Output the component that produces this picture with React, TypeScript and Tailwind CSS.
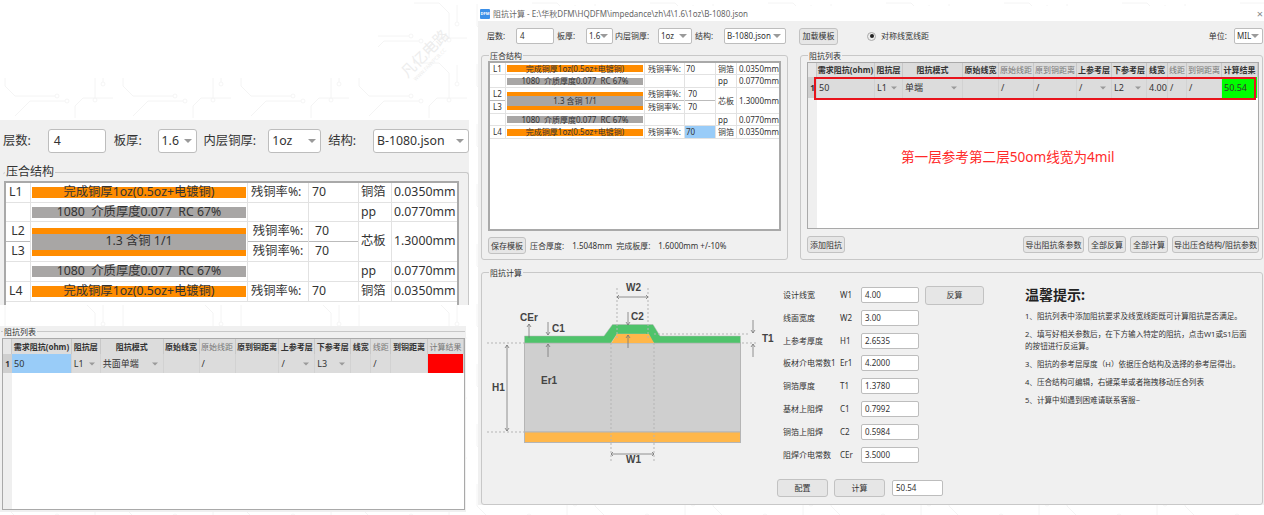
const font = 'font-["Noto_Sans","Noto_Sans_CJK_SC",sans-serif]'

const orange = 'bg-[#ff8c00]'
const grey = 'bg-[#a8a6a5]'

function Caret({ className }: { className: string }) {
	return <span className={`border-x-[4px] border-t-[4px] border-x-transparent border-t-[#9a9a9a] ${className}`} />
}

function Field({ value, className, caret }: { value: string; className: string; caret?: boolean }) {
	return (
		<div className={`flex items-center justify-between bg-white border border-[#bdbdbd] rounded-[2px] shrink-0 ${className}`}>
			<span>{value}</span>
			{caret && <Caret className="mr-1" />}
		</div>
	)
}

function Btn({ label, className }: { label: string; className: string }) {
	return <div className={`flex items-center justify-center bg-[#e6e6e6] border border-[#c2c2c2] rounded-[3px] text-[#333] shrink-0 ${className}`}>{label}</div>
}

function Group({ title, className, titleClass, children }: { title: string; className: string; titleClass: string; children?: React.ReactNode }) {
	return (
		<div className={`relative border border-[#c8c8c8] rounded-[3px] ${className}`}>
			<span className={`absolute bg-[#f0f0f0] px-[1px] leading-none text-[#333] ${titleClass}`}>{title}</span>
			{children}
		</div>
	)
}

// faint circuit board background, only shows in the gaps between the panels
function Watermark() {
	return (
		<svg className="absolute inset-0 w-[1264px] h-[515px]" viewBox="0 0 1264 515">
			<defs>
				<pattern id="pcb" width="118" height="60" patternUnits="userSpaceOnUse">
					<g fill="none" stroke="#f4f4f4" strokeWidth="1">
						<path d="M5 4v22l10 10h40M60 3h25l10 10v25M15 56l15-15h35M75 58V46l8-8h30M103 5v17" />
						<circle cx="57" cy="36" r="2" />
						<circle cx="95" cy="40" r="2" />
						<circle cx="103" cy="24" r="2" />
						<circle cx="67" cy="41" r="2" />
					</g>
				</pattern>
			</defs>
			<rect x="378" y="0" width="886" height="78" fill="url(#pcb)" />
			<rect x="0" y="78" width="1264" height="437" fill="url(#pcb)" />
			<g transform="rotate(-45 425 58)" fontFamily="Noto Sans CJK SC, sans-serif" fill="#ededed">
				<text x="398" y="60" fontSize="15">凡亿电路</text>
				<text x="402" y="68" fontSize="5">WWW.FANYPCB.CC</text>
			</g>
		</svg>
	)
}

type StackSize = {
	box: string
	row: string[]
	cols: string[]
	bar: string
	core: string
	coreBar: string
	pad: string
	corePad: string
}

const bigStack: StackSize = {
	box: 'w-[455px] h-[124px] border-x-2 border-t-2 border-[#a9a9a9] text-[12.3px]',
	row: ['h-[20px]', 'h-[19px]', 'h-[40px]', 'h-[20px]', 'h-[20px]'],
	cols: ['w-[25px]', 'w-[217px]', 'w-[61px]', 'w-[50px]', 'w-[33px]', 'flex-1'],
	bar: 'h-[11px] mx-[1px] w-[214px]',
	core: 'h-[28px] w-[214px] mx-[1px]',
	coreBar: 'h-[6px]',
	pad: 'pl-[3px]',
	corePad: 'pl-[6px]',
}

const smallStack: StackSize = {
	box: 'w-[293px] h-[170px] border-2 border-[#a9a9a9] text-[8px]',
	row: ['h-[12px]', 'h-[13px]', 'h-[26px]', 'h-[12px]', 'h-[13px]'],
	cols: ['w-[16px]', 'w-[139px]', 'w-[40px]', 'w-[31px]', 'w-[21px]', 'flex-1'],
	bar: 'h-[7px] mx-[1px] w-[138px]',
	core: 'h-[18px] w-[138px] mx-[1px]',
	coreBar: 'h-[4px]',
	pad: 'pl-[1px]',
	corePad: 'pl-[3px]',
}

function StackRow({ s, h, layer, bar, barText, rate, selected, kind, thick }: { s: StackSize; h: string; layer?: string; bar: string; barText: string; rate?: boolean; selected?: boolean; kind: string; thick: string }) {
	return (
		<div className={`flex border-b border-[#e2e2e2] ${h}`}>
			<div className={`${s.cols[0]} shrink-0 flex items-center pl-[3px] border-r border-[#e2e2e2]`}>{layer}</div>
			<div className={`${s.cols[1]} shrink-0 flex items-center border-r border-[#e2e2e2]`}>
				<div className={`${s.bar} ${bar} flex items-center justify-center whitespace-pre text-[#333]`}>{barText}</div>
			</div>
			<div className={`${s.cols[2]} shrink-0 flex items-center pl-[3px] whitespace-nowrap border-r border-[#e2e2e2]`}>{rate && '残铜率%:'}</div>
			<div className={`${s.cols[3]} shrink-0 flex items-center ${s.pad} border-r border-[#e2e2e2] ${selected ? 'bg-[#99ccf8]' : ''}`}>{rate && '70'}</div>
			<div className={`${s.cols[4]} shrink-0 flex items-center pl-[2px] whitespace-nowrap border-r border-[#e2e2e2]`}>{kind}</div>
			<div className={`${s.cols[5]} flex items-center pl-[2px] whitespace-nowrap`}>{thick}</div>
		</div>
	)
}

function CoreRow({ s }: { s: StackSize }) {
	return (
		<div className={`flex border-b border-[#e2e2e2] ${s.row[2]}`}>
			<div className={`${s.cols[0]} shrink-0 flex flex-col border-r border-[#e2e2e2]`}>
				<div className="flex-1 flex items-center justify-center border-b border-[#bbbbbb]">L2</div>
				<div className="flex-1 flex items-center justify-center">L3</div>
			</div>
			<div className={`${s.cols[1]} shrink-0 flex items-center border-r border-[#e2e2e2]`}>
				<div className={`${s.core} ${grey} flex flex-col`}>
					<div className={`${s.coreBar} ${orange}`} />
					<div className="flex-1 flex items-center justify-center text-[#333]">1.3 含铜 1/1</div>
					<div className={`${s.coreBar} ${orange}`} />
				</div>
			</div>
			<div className={`${s.cols[2]} shrink-0 flex flex-col border-r border-[#e2e2e2]`}>
				<div className="flex-1 flex items-center justify-center whitespace-nowrap border-b border-[#bbbbbb]">残铜率%:</div>
				<div className="flex-1 flex items-center justify-center whitespace-nowrap">残铜率%:</div>
			</div>
			<div className={`${s.cols[3]} shrink-0 flex flex-col border-r border-[#e2e2e2]`}>
				<div className={`flex-1 flex items-center ${s.corePad} border-b border-[#bbbbbb]`}>70</div>
				<div className={`flex-1 flex items-center ${s.corePad}`}>70</div>
			</div>
			<div className={`${s.cols[4]} shrink-0 flex items-center pl-[2px] whitespace-nowrap border-r border-[#e2e2e2]`}>芯板</div>
			<div className={`${s.cols[5]} flex items-center pl-[2px] whitespace-nowrap`}>1.3000mm</div>
		</div>
	)
}

function StackTable({ s, selected }: { s: StackSize; selected?: boolean }) {
	return (
		<div className={`bg-white text-[#333] leading-none overflow-hidden ${s.box}`}>
			<StackRow s={s} h={s.row[0]} layer="L1" bar={orange} barText="完成铜厚1oz(0.5oz+电镀铜)" rate kind="铜箔" thick="0.0350mm" />
			<StackRow s={s} h={s.row[1]} bar={grey} barText="1080  介质厚度0.077  RC 67%" kind="pp" thick="0.0770mm" />
			<CoreRow s={s} />
			<StackRow s={s} h={s.row[3]} bar={grey} barText="1080  介质厚度0.077  RC 67%" kind="pp" thick="0.0770mm" />
			<StackRow s={s} h={s.row[4]} layer="L4" bar={orange} barText="完成铜厚1oz(0.5oz+电镀铜)" rate selected={selected} kind="铜箔" thick="0.0350mm" />
		</div>
	)
}

type Cell = { w: string; head: string; dim?: boolean; value?: string; caret?: boolean; fill?: string }

const leftCols: Cell[] = [
	{ w: 'w-[60px]', head: '需求阻抗(ohm)', value: '50', fill: 'bg-[#99ccf8]' },
	{ w: 'w-[29px]', head: '阻抗层', value: 'L1', caret: true },
	{ w: 'w-[63px]', head: '阻抗模式', value: '共面单端', caret: true },
	{ w: 'w-[36px]', head: '原始线宽' },
	{ w: 'w-[36px]', head: '原始线距', dim: true, value: '/' },
	{ w: 'w-[44px]', head: '原到铜距离' },
	{ w: 'w-[36px]', head: '上参考层', value: '/', caret: true },
	{ w: 'w-[36px]', head: '下参考层', value: 'L3', caret: true },
	{ w: 'w-[20px]', head: '线宽' },
	{ w: 'w-[20px]', head: '线距', dim: true, value: '/' },
	{ w: 'w-[37px]', head: '到铜距离' },
	{ w: 'w-[36px]', head: '计算结果', dim: true, fill: 'bg-[#ff0000]' },
]

const rightCols: Cell[] = [
	{ w: 'w-[58px]', head: '需求阻抗(ohm)', value: '50' },
	{ w: 'w-[28px]', head: '阻抗层', value: 'L1', caret: true },
	{ w: 'w-[60px]', head: '阻抗模式', value: '单端', caret: true },
	{ w: 'w-[36px]', head: '原始线宽' },
	{ w: 'w-[35px]', head: '原始线距', dim: true, value: '/' },
	{ w: 'w-[43px]', head: '原到铜距离', dim: true, value: '/' },
	{ w: 'w-[35px]', head: '上参考层', value: '/', caret: true },
	{ w: 'w-[35px]', head: '下参考层', value: 'L2', caret: true },
	{ w: 'w-[21px]', head: '线宽', value: '4.00' },
	{ w: 'w-[19px]', head: '线距', dim: true, value: '/' },
	{ w: 'w-[35px]', head: '到铜距离', dim: true, value: '/' },
	{ w: 'w-[36px]', head: '计算结果', fill: 'bg-[#00ff00]', value: '50.54' },
]

function ImpTable({ cols, className, headH, rowH, rowBar, bottom }: { cols: Cell[]; className: string; headH: string; rowH: string; rowBar: string; bottom?: React.ReactNode }) {
	return (
		<div className={`relative flex flex-col bg-white border border-[#a9a9a9] text-[8px] leading-none overflow-hidden ${className}`}>
			<div className={`flex bg-[#dcdcdc] ${headH}`}>
				<div className={`${rowBar} bg-[#e6e6e6] border-r border-[#c8c8c8]`} />
				{cols.map((c, i) => (
					<div key={i} className={`${c.w} flex items-center justify-center whitespace-nowrap font-bold border-r border-[#c8c8c8] ${c.dim ? 'text-[#777] font-normal' : 'text-[#333]'}`}>
						{c.head}
					</div>
				))}
			</div>
			<div className={`flex bg-[#dcdcdc] text-[#333] ${rowH}`}>
				<div className={`${rowBar} bg-[#cfcfcf] flex items-center justify-center font-bold`}>1</div>
				{cols.map((c, i) => (
					<div key={i} className={`${c.w} flex items-center justify-between px-[2px] text-[9px] border-r border-[#d2d2d2] ${c.fill ?? ''}`}>
						<span>{c.value}</span>
						{c.caret && <Caret className="mr-[2px] scale-75" />}
					</div>
				))}
			</div>
			<div className="flex-1 flex">
				<div className={`${rowBar} bg-[#efefef]`} />
				{bottom}
			</div>
		</div>
	)
}

function Diagram() {
	const dash = { stroke: '#b5b5b5', strokeDasharray: '2 2', fill: 'none' }
	const arrow = { stroke: '#777', strokeWidth: 0.8, fill: 'none' }
	const label = { fontSize: 10, fontWeight: 700, fill: '#444', fontFamily: 'Liberation Sans, sans-serif' }
	return (
		<svg className="w-[300px] h-[226px] -ml-[2px] mt-[6px] shrink-0" viewBox="0 0 300 226">
			<rect x="44.5" y="64" width="216" height="89" fill="#cfcfcf" stroke="#b5b5b5" />
			<rect x="44.5" y="153" width="216" height="10.5" fill="#ffb74a" stroke="#b5b5b5" />
			<path d="M44.5 57H124L132.5 45.5H173L180 57H260.5V64H174L166 55H137L131 64H44.5Z" fill="#4fc36b" stroke="#b5b5b5" strokeWidth="0.5" />
			<path d="M131.5 64L137 55H169L174 64Z" fill="#ffb74a" />
			<g {...dash}>
				<path d="M137 9V60M168 9V60M131 64V184M174 64V184M7 64H44M7 153H44M174 55H270M262 64H278" />
			</g>
			<g {...arrow}>
				<path d="M137 18H168M139 16L137 18L139 20M166 16L168 18L166 20" />
				<path d="M131 175H174M133 173L131 175L133 177M172 173L174 175L172 177" />
				<path d="M27 66V152M25 69L27 66L29 69M25 149L27 152L29 149" />
				<path d="M49 45V59M47 48L49 45L51 48" />
				<path d="M68 43V56M66 53L68 56L70 53M68 65V78M66 68L68 65L70 68" />
				<path d="M148 33V46M146 43L148 46L150 43M148 56V69M146 59L148 56L150 59" />
				<path d="M273 41V54M271 51L273 54L275 51M273 65V78M271 68L273 65L275 68" />
			</g>
			<text x="146" y="12" {...label}>W2</text>
			<text x="40" y="42" {...label}>CEr</text>
			<text x="72" y="53" {...label}>C1</text>
			<text x="151" y="41" {...label}>C2</text>
			<text x="282" y="63" {...label}>T1</text>
			<text x="12" y="112" {...label}>H1</text>
			<text x="61" y="105" {...label}>Er1</text>
			<text x="146" y="184" {...label}>W1</text>
		</svg>
	)
}

const params = [
	['设计线宽', 'W1', '4.00'],
	['线面宽度', 'W2', '3.00'],
	['上参考厚度', 'H1', '2.6535'],
	['板材介电常数1', 'Er1', '4.2000'],
	['铜箔厚度', 'T1', '1.3780'],
	['基材上阻焊', 'C1', '0.7992'],
	['铜箔上阻焊', 'C2', '0.5984'],
	['阻焊介电常数', 'CEr', '3.5000'],
]

const hints = [
	'1、阻抗列表中添加阻抗要求及线宽线距既可计算阻抗是否满足。',
	'2、填写好相关参数后，在下方输入特定的阻抗，点击W1或S1后面的按钮进行反运算。',
	'3、阻抗的参考层厚度（H）依据压合结构及选择的参考层得出。',
	'4、压合结构可编辑，右键菜单或者拖拽移动压合列表',
	'5、计算中如遇到困难请联系客服~',
]

function LeftPanels() {
	return (
		<div className="w-[469px] shrink-0 pt-[120px]">
			<div className="bg-[#f0f0f0] h-[185px] overflow-hidden">
				<div className="flex items-center h-[24px] mt-[9px] text-[12.3px] text-[#333] leading-none">
					<span className="ml-[3px] w-[45px]">层数:</span>
					<Field value="4" className="w-[58px] h-[24px] pl-[5px] rounded-[3px]" />
					<span className="ml-[8px] w-[44px]">板厚:</span>
					<Field value="1.6" caret className="w-[39px] h-[24px] pl-[3px] rounded-[3px]" />
					<span className="ml-[7px] w-[65px] whitespace-nowrap">内层铜厚:</span>
					<Field value="1oz" caret className="w-[53px] h-[24px] pl-[3px] rounded-[3px]" />
					<span className="ml-[7px] w-[45px]">结构:</span>
					<Field value="B-1080.json" caret className="w-[96px] h-[24px] pl-[3px] rounded-[3px]" />
				</div>
				<Group title="压合结构" className="mt-[19px] ml-[3px] w-[466px] h-[200px] pt-[8px] pl-[1px] border-b-0 border-l-0" titleClass="-top-[7px] left-[2px] text-[12px]">
					<StackTable s={bigStack} />
				</Group>
			</div>
			<div className="bg-[#f0f0f0] h-[186px] w-[466px] mt-[21px] pt-[5px]">
				<div className="relative border-t border-[#c8c8c8] mx-[1px]">
					<span className="absolute -top-[4px] left-[2px] bg-[#f0f0f0] px-[1px] text-[8px] leading-none text-[#333]">阻抗列表</span>
				</div>
				<ImpTable cols={leftCols} className="w-[463px] h-[172px] ml-[2px] mt-[6px]" headH="h-[15px]" rowH="h-[19px]" rowBar="w-[9px] shrink-0" />
			</div>
		</div>
	)
}

function RightWindow() {
	return (
		<div className="w-[786px] ml-[9px] shrink-0 h-[505px] pt-[6px] flex flex-col">
			<div className="h-[15px] bg-white flex items-center text-[8px] text-[#666] leading-none">
				<div className="ml-[2px] w-[10px] h-[10px] bg-[#3b8fe8] rounded-[1px] flex items-center justify-center text-[4px] font-bold text-white">DFM</div>
				<span className="ml-[3px]">阻抗计算 - E:\华秋DFM\HQDFM\impedance\zh\4\1.6\1oz\B-1080.json</span>
				<span className="ml-auto mr-[1px] text-[11px] text-[#888]">×</span>
			</div>
			<div className="flex-1 bg-[#f0f0f0] flex flex-col text-[8px] text-[#333] leading-none">
				<div className="flex items-center h-[16px] mt-[7px]">
					<span className="ml-[9px] w-[29px]">层数:</span>
					<Field value="4" className="w-[38px] h-[16px] pl-[3px]" />
					<span className="ml-[3px] w-[29px]">板厚:</span>
					<Field value="1.6" caret className="w-[27px] h-[16px] pl-[2px]" />
					<span className="ml-[2px] w-[43px] whitespace-nowrap">内层铜厚:</span>
					<Field value="1oz" caret className="w-[34px] h-[16px] pl-[2px]" />
					<span className="ml-[3px] w-[29px]">结构:</span>
					<Field value="B-1080.json" caret className="w-[62px] h-[16px] pl-[2px]" />
					<Btn label="加载模板" className="w-[39px] h-[17px] ml-[13px]" />
					<span className="ml-[29px] w-[9px] h-[9px] rounded-full border border-[#aaa] bg-[#eee] flex items-center justify-center">
						<span className="w-[4px] h-[4px] rounded-full bg-[#222]" />
					</span>
					<span className="ml-[5px]">对称线宽线距</span>
					<span className="ml-auto">单位:</span>
					<Field value="MIL" caret className="w-[29px] h-[16px] pl-[2px] ml-[7px] mr-[1px]" />
				</div>
				<div className="flex mt-[11px] h-[205px]">
					<Group title="压合结构" className="ml-[3px] w-[307px] h-[205px] pt-[5px] pl-[6px]" titleClass="-top-[4px] left-[7px]">
						<StackTable s={smallStack} selected />
						<div className="flex items-center mt-[6px]">
							<Btn label="保存模板" className="w-[38px] h-[17px]" />
							<span className="ml-[4px]">压合厚度:</span>
							<span className="ml-[8px]">1.5048mm</span>
							<span className="ml-[4px]">完成板厚:</span>
							<span className="ml-[8px]">1.6000mm +/-10%</span>
						</div>
					</Group>
					<Group title="阻抗列表" className="ml-[12px] w-[463px] h-[205px] pt-[6px] pl-[6px]" titleClass="-top-[4px] left-[7px]">
						<ImpTable
							cols={rightCols}
							className="w-[452px] h-[167px]"
							headH="h-[14px]"
							rowH="h-[21px]"
							rowBar="w-[9px] shrink-0"
							bottom={<div className="flex-1 pt-[52px] pl-[84px] text-[13.6px] text-[#ff2a2a] whitespace-nowrap">第一层参考第二层50om线宽为4mil</div>}
						/>
						<div className="absolute top-[21px] left-[13px] w-[442px] h-[23px] border-2 border-[#e8141c]" />
						<div className="flex mt-[7px] w-[452px]">
							<Btn label="添加阻抗" className="w-[38px] h-[17px]" />
							<Btn label="导出阻抗条参数" className="w-[61px] h-[17px] ml-auto" />
							<Btn label="全部反算" className="w-[38px] h-[17px] ml-[4px]" />
							<Btn label="全部计算" className="w-[38px] h-[17px] ml-[4px]" />
							<Btn label="导出压合结构/阻抗参数" className="w-[87px] h-[17px] ml-[4px]" />
						</div>
					</Group>
				</div>
				<Group title="阻抗计算" className="flex ml-[3px] mt-[12px] w-[782px] h-[233px]" titleClass="-top-[4px] left-[7px]">
					<Diagram />
					<div className="w-[245px] shrink-0 pl-[3px] pt-[14px] flex flex-col">
						{params.map((p, i) => (
							<div key={p[1]} className="flex items-center h-[16px] mb-[6.8px]">
								<span className="w-[57px] whitespace-nowrap">{p[0]}</span>
								<span className="w-[21px]">{p[1]}</span>
								<Field value={p[2]} className="w-[58px] h-[16px] pl-[3px]" />
								{i === 0 && <Btn label="反算" className="w-[59px] h-[19px] ml-[6px]" />}
							</div>
						))}
						<div className="flex items-center -ml-[6px] mt-[10px]">
							<Btn label="配置" className="w-[51px] h-[18px]" />
							<Btn label="计算" className="w-[51px] h-[18px] ml-[6px]" />
							<Field value="50.54" className="w-[51px] h-[16px] pl-[3px] ml-[7px]" />
						</div>
					</div>
					<div className="flex-1 pr-[8px] pt-[15px]">
						<div className="text-[14px] font-bold text-[#222] mb-[8px]">温馨提示:</div>
						{hints.map(h => (
							<p key={h} className="text-[7.6px] leading-[12px] mb-[6px] text-[#333]">{h}</p>
						))}
					</div>
				</Group>
			</div>
		</div>
	)
}

export default function App() {
	return (
		<div className={`relative w-[1264px] h-[515px] overflow-hidden bg-white ${font}`}>
			<Watermark />
			<div className="relative flex w-full h-full">
				<LeftPanels />
				<RightWindow />
			</div>
		</div>
	)
}
